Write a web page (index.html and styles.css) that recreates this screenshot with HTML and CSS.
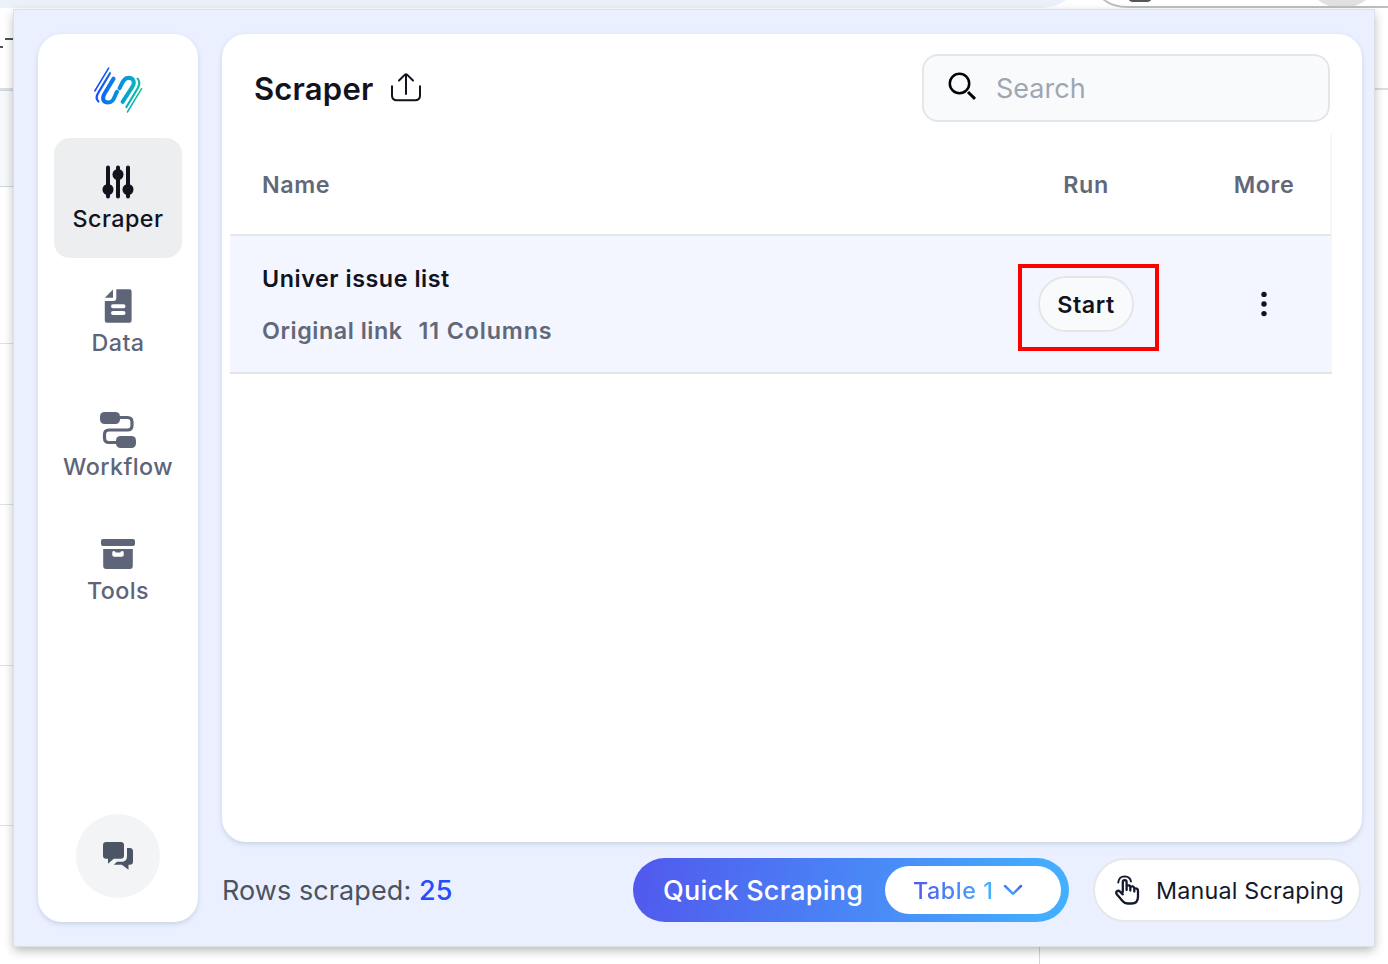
FILE: index.html
```html
<!DOCTYPE html>
<html lang="en">
<head>
<meta charset="utf-8">
<title>Scraper</title>
<link rel="stylesheet" href="styles.css">
</head>
<body>
<svg class="backdrop" viewBox="0 0 1388 964" aria-hidden="true">
  <path fill="#ebf0f9" d="M0 0H1066Q1057 7.500 1040 8H0z"/>
  <path fill="#e1e1e1" d="M1318 0H1366Q1357 7.500 1342 7.500Q1327 7.500 1318 0z"/>
  <path fill="none" stroke="#bdbfc0" stroke-width="2" d="M1102 -2Q1111 7 1128 7H1388"/>
  <path fill="#55575a" d="M1129 0H1151Q1150 2 1146 2H1134Q1130 2 1129 0z"/>
  <path fill="#505253" d="M5 38H14V40H5zM0 46H3V48H0z"/>
  <path fill="#f6f8fa" d="M0 91H14V186H0z"/>
  <path fill="#dcdfdf" d="M0 88H14V90H0zM1374 88H1388V90H1374z"/>
  <path fill="#cbd7e1" d="M0 90H14V91H0zM0 186H14V187H0zM1039 946H1040V964H1039z"/>
  <path fill="#dfe1e3" d="M0 343H14V344H0zM0 504H14V505H0zM0 665H14V666H0zM0 825H14V826H0z"/>
</svg>

<div class="popup">
  <nav class="sidebar">
    <svg class="logo" width="52" height="48" viewBox="92 66 52 48" fill="none" stroke-linecap="round">
      <defs>
        <linearGradient id="brand" gradientUnits="userSpaceOnUse" x1="96" y1="84" x2="141" y2="96">
          <stop offset="0" stop-color="#1744ff"/><stop offset=".3" stop-color="#0b77ee"/>
          <stop offset=".65" stop-color="#06a0d8"/><stop offset="1" stop-color="#10c893"/>
        </linearGradient>
      </defs>
      <g stroke="url(#brand)">
        <path stroke-width="1.500" d="M108.700 68L94.800 91"/>
        <path stroke-width="2.200" d="M110 73.200L98.400 92.600Q94.800 98 98.500 101.500"/>
        <path stroke-width="4" d="M113.600 78.600L104.500 93.800C101.200 99.500 104 102.400 108 102.400C114 102.400 114 97 117 91.800"/>
        <path stroke-width="4" d="M119.500 88.300C122 83.500 123.500 77.800 128.500 77.800C134 78 135.200 82.500 132.200 87.200L122.600 101.800"/>
        <path stroke-width="2.200" d="M137.600 78.600Q141 82.500 137.700 88.200L126.400 107"/>
        <path stroke-width="1.500" d="M141.600 88.600L127.400 112"/>
      </g>
    </svg>

    <a class="tab tab-active">
      <svg width="36" height="36" viewBox="0 0 36 36">
        <path fill="none" stroke="currentColor" stroke-width="4" stroke-linecap="round" d="M8 3.500V32.500M18 3.500V32.500M28 3.500V32.500"/>
        <g fill="currentColor"><circle cx="8" cy="25.500" r="5.500"/><circle cx="18" cy="10.500" r="5.500"/><circle cx="28" cy="25.500" r="5.500"/></g>
      </svg>
      <span>Scraper</span>
    </a>
    <a class="tab">
      <svg width="36" height="36" viewBox="0 0 36 36" fill="currentColor">
        <path fill-rule="evenodd" d="M16.300 1.300H29.500Q31.600 1.300 31.600 3.400V32.500Q31.600 34.700 29.500 34.700H7Q4.800 34.700 4.800 32.500V12.900H13.200Q16.300 12.900 16.300 10zM13 16.300a2 2 0 0 0 0 4H23.500a2 2 0 0 0 0-4zM13 23a2 2 0 0 0 0 4H23.500a2 2 0 0 0 0-4z"/>
        <path d="M13 1.500V9.800H4.800z"/>
      </svg>
      <span>Data</span>
    </a>
    <a class="tab">
      <svg width="36" height="36" viewBox="0 0 36 36">
        <g fill="currentColor"><rect width="20" height="12" rx="4.500"/><rect x="16" y="24" width="20" height="12" rx="4.500"/></g>
        <path fill="none" stroke="currentColor" stroke-width="3.200" d="M19 5.500H27.500Q32 5.500 32 10V13.500Q32 18 27.500 18H9Q4.500 18 4.500 22.500V26Q4.500 30.500 9 30.500H18"/>
      </svg>
      <span>Workflow</span>
    </a>
    <a class="tab">
      <svg width="36" height="36" viewBox="0 0 36 36" fill="currentColor">
        <rect x="1" y="3" width="34" height="7" rx="2"/>
        <path fill-rule="evenodd" d="M3.200 13H32.800V30Q32.800 33 29.800 33H6.200Q3.200 33 3.200 30zM12.300 16.300V19Q12.300 20.800 14.200 20.800H21.800Q23.700 20.800 23.700 19V16.300Q23.700 15 22 15Q20.700 15 20.300 16.600H15.700Q15.300 15 14 15Q12.300 15 12.300 16.300z"/>
      </svg>
      <span>Tools</span>
    </a>

    <button class="chat" aria-label="Chat">
      <svg width="32" height="30" viewBox="0 0 32 30" fill="currentColor">
        <path d="M4.200 1H18.800Q22 1 22 4.200V14.500Q22 17.700 18.800 17.700H11.700L6 22.800V17.700H4.200Q1 17.700 1 14.500V4.200Q1 1 4.200 1z"/>
        <path d="M25 7H27.600Q31 7 31 10.400V20.500Q31 23.800 27.600 23.800H26.500V28.700L19.800 23.800H11.800L15 20.800H19.500Q25 20.800 25 15z"/>
      </svg>
    </button>
  </nav>

  <div class="content">
    <main class="card">
      <header class="card-head">
        <h1>Scraper</h1>
        <svg class="share" width="32" height="32" viewBox="0 0 32 32" fill="none" stroke="currentColor" stroke-width="2" stroke-linecap="round" stroke-linejoin="round">
          <path d="M2 14.300V23.500Q2 28.300 7 28.300H25Q30 28.300 30 23.500V14.300M16 22V2.500M9 8.500L14.700 2.900Q16 1.700 17.300 2.900L23 8.500"/>
        </svg>
        <label class="search">
          <svg class="lens" width="30" height="30" viewBox="0 0 30 30" fill="none" stroke="currentColor" stroke-width="2.500"><circle cx="11.500" cy="11.500" r="9.700"/><path stroke-width="3" d="M20 20L27 26.800"/></svg>
          <span>Search</span>
        </label>
      </header>

      <section class="table">
        <div class="row row-head">
          <div>Name</div><div class="center">Run</div><div class="center">More</div>
        </div>
        <div class="row row-item">
          <div class="item">
            <strong>Univer issue list</strong>
            <div class="meta"><span>Original link</span><span class="count">11 Columns</span></div>
          </div>
          <div class="center run"><button class="start">Start</button><i class="highlight"></i></div>
          <div class="center">
            <svg width="6" height="26" viewBox="0 0 6 26" fill="#11131f"><circle cx="3" cy="3.400" r="2.700"/><circle cx="3" cy="13" r="2.700"/><circle cx="3" cy="22.600" r="2.700"/></svg>
          </div>
        </div>
      </section>
    </main>

    <footer class="footer">
      <p class="rows">Rows scraped: <b>25</b></p>
      <div class="quick">
        <span class="quick-label">Quick Scraping</span>
        <button class="picker">
          <span>Table 1</span>
          <svg width="20" height="12" viewBox="0 0 20 12" fill="none" stroke="url(#chev)" stroke-width="2.500" stroke-linecap="round" stroke-linejoin="round">
            <defs><linearGradient id="chev" x1="1" y1="0" x2="0.300" y2="1"><stop stop-color="#5158ed"/><stop offset="1" stop-color="#45aaff"/></linearGradient></defs>
            <path d="M2 2L10 9.800L18 2"/>
          </svg>
        </button>
      </div>
      <button class="manual">
        <svg width="28" height="30" viewBox="0 0 28 30" fill="none" stroke="currentColor" stroke-width="2.300" stroke-linecap="round" stroke-linejoin="round">
          <path d="M8.800 17V7.300Q8.800 5.200 10.700 5.200Q12.600 5.200 12.600 7.300V15M12.600 10.800Q15.800 9.500 16.300 12V15.500M16.300 11.800Q19.800 10.500 20.300 13.300V16.500M20.300 13.500Q24 12.800 24 16V21.500Q24 28.500 17.500 28.500H13.500Q10.500 28.500 8.500 26L3 19.500Q1.500 17.500 3 16.200Q4.500 15.200 6 16.600L8.800 19.300"/>
          <path stroke-width="1.900" d="M4.200 7.500Q5 1.500 10.700 1.400Q16 1.500 17 6.500"/>
        </svg>
        <span>Manual Scraping</span>
      </button>
    </footer>
  </div>
</div>
</body>
</html>
```

FILE: styles.css
```css
* { box-sizing: border-box; }
body {
  margin: 0;
  height: 964px;
  overflow: hidden;
  padding: 10px 14px 18px;
  background: #fff;
  font-family: Inter, "Liberation Sans", sans-serif;
  color: #11131f;
}
button { font: inherit; color: inherit; letter-spacing: inherit; border: 0; padding: 0; }
svg { display: block; flex: none; }
.backdrop { position: absolute; left: 0; top: 0; width: 1388px; height: 964px; }

.popup {
  position: relative;
  width: 1360px;
  height: 936px;
  padding: 24px 12px 24px 24px;
  display: flex;
  gap: 24px;
  background: #eaf0ff;
  box-shadow: 0 0 0 1px #dde0e2, 0 4px 10px rgba(0, 0, 0, .3);
}

.sidebar {
  width: 160px;
  padding: 32px 16px 24px;
  display: flex;
  flex-direction: column;
  align-items: center;
  background: #fff;
  border-radius: 24px;
  box-shadow: 0 2px 5px rgba(40, 50, 90, .16);
}
.logo { margin-bottom: 24px; }
.tab {
  width: 128px;
  height: 120px;
  margin-bottom: 4px;
  padding-top: 26px;
  display: flex;
  flex-direction: column;
  align-items: center;
  gap: 3px;
  border-radius: 16px;
  color: #5f6578;
  font-size: 23.3px;
  font-weight: 480;
  line-height: 32px;
  letter-spacing: .45px;
}
.tab-active { background: #edeeef; color: #11131f; }
.chat {
  width: 84px;
  height: 84px;
  margin-top: auto;
  display: flex;
  align-items: center;
  justify-content: center;
  border-radius: 50%;
  background: #f3f4f6;
  color: #4b5565;
}

.content { width: 1140px; display: flex; flex-direction: column; gap: 16px; }
.card {
  height: 808px;
  padding: 20px 30px 0 8px;
  background: #fff;
  border-radius: 24px;
  box-shadow: 0 2px 5px rgba(40, 50, 90, .16);
}
.card-head { height: 80px; padding: 0 2px 12px 24px; display: flex; align-items: center; }
h1 { margin: 0; padding-top: 2px; width: 120px; font-size: 31px; font-weight: 600; line-height: 40px; letter-spacing: .2px; }
.share { margin-left: 16px; }
.search {
  width: 408px;
  height: 68px;
  margin-left: auto;
  padding-left: 24px;
  display: flex;
  align-items: center;
  gap: 18px;
  border: 2px solid #e4e6ea;
  border-radius: 16px;
  background: #f9fafc;
  color: #000;
  font-size: 27px;
}
.lens { margin-bottom: 2px; }
.search span { color: #9fa6b3; }

.row { display: grid; grid-template-columns: 714px 220px 136px; align-items: center; padding-left: 32px; }
.center { display: flex; justify-content: center; }
.row-head {
  height: 102px;
  border-bottom: 2px solid #e4e7ec;
  border-right: 2px solid #f7f7f8;
  color: #626879;
  font-size: 23.3px;
  font-weight: 600;
  letter-spacing: .6px;
}
.row-item {
  height: 138px;
  background: #f3f6ff;
  border-bottom: 2px solid #e4e5ea;
  font-size: 23.3px;
  font-weight: 600;
  letter-spacing: .55px;
}
.item { display: grid; gap: 20px; padding-top: 2px; line-height: 32px; }
.item strong { font-weight: 600; }
.meta { display: flex; gap: 16px; color: #626879; }
.count { letter-spacing: .85px; }
.run { position: relative; }
.start {
  width: 96px;
  height: 56px;
  border: 2px solid #e4e6ea;
  border-radius: 28px;
  background: #f9fafc;
}
.highlight { position: absolute; left: 42px; top: -12px; width: 141px; height: 87px; border: 4px solid #ff0000; }

.footer { height: 64px; display: flex; align-items: center; }
.rows { margin: 0; font-size: 27px; color: #4c5360; letter-spacing: .08px; }
.rows b { color: #264ef5; font-weight: 500; }
.quick {
  width: 436px;
  height: 64px;
  margin-left: auto;
  padding: 8px 8px 8px 30px;
  display: flex;
  align-items: center;
  justify-content: space-between;
  border-radius: 32px;
  background: linear-gradient(100deg, #5158ed, #43b2ff);
  color: #fff;
  font-size: 27px;
  font-weight: 500;
  letter-spacing: .25px;
}
.picker {
  width: 176px;
  height: 48px;
  padding-left: 28px;
  display: flex;
  align-items: center;
  gap: 10px;
  border-radius: 24px;
  background: #fff;
  font-size: 23.3px;
  letter-spacing: .55px;
}
.picker span {
  background: linear-gradient(90deg, #5158ed, #43b2ff);
  -webkit-background-clip: text;
  background-clip: text;
  color: transparent;
}
.manual {
  width: 268px;
  height: 64px;
  margin-left: 24px;
  margin-right: 1px;
  padding-left: 19px;
  display: flex;
  align-items: center;
  gap: 14px;
  border: 2px solid #e6e7ea;
  border-radius: 32px;
  background: #fff;
  color: #131a2c;
  font-size: 23.3px;
  letter-spacing: .2px;
  white-space: nowrap;
}
```
